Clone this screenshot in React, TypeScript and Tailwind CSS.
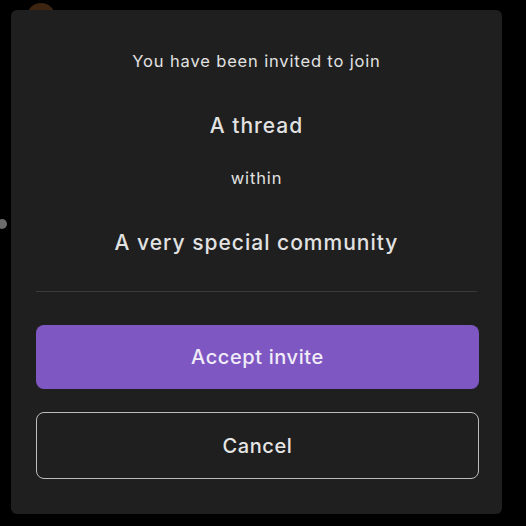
import React from "react";

export default function App() {
  return (
    <div className="relative w-[526px] h-[526px] bg-black overflow-hidden font-['Inter',sans-serif]">
      {/* bits of the page behind the dialog */}
      <div className="absolute left-[27px] top-[3px] w-[28px] h-[28px] rounded-full bg-[#3d2511]" />
      <div className="absolute left-[-3px] top-[219px] w-[10px] h-[10px] rounded-full bg-[#6b6b6b]" />

      <div className="absolute left-[11px] top-[10px] w-[491px] h-[504px] rounded-md bg-[#1f1f1f] px-[25px] flex flex-col">
        <div className="flex flex-col items-center text-[#e2e2e2]">
          <p className="mt-[40px] text-[16.5px] leading-[22px] tracking-[0.85px]">You have been invited to join</p>
          <p className="mt-[40px] text-[21px] leading-[28px] font-medium tracking-[1px]">A thread</p>
          <p className="mt-[27px] text-[16.5px] leading-[22px] tracking-[0.85px]">within</p>
          <p className="mt-[40px] text-[21px] leading-[28px] font-medium tracking-[1px]">A very special community</p>
        </div>
        <div className="mt-[34px] h-px bg-[#3a3a3a]" />
        <button
          type="button"
          className="mt-[33px] h-[64px] w-[443px] rounded-lg bg-[#7e57c2] text-[20px] tracking-[0.6px] text-[#f1ecf8] font-medium"
        >
          Accept invite
        </button>
        <button
          type="button"
          className="mt-[23px] h-[67px] w-[443px] rounded-lg border-[1.5px] border-[#bdbdbd] text-[20px] tracking-[0.6px] text-[#e6e6e6] font-medium"
        >
          Cancel
        </button>
      </div>
    </div>
  );
}
